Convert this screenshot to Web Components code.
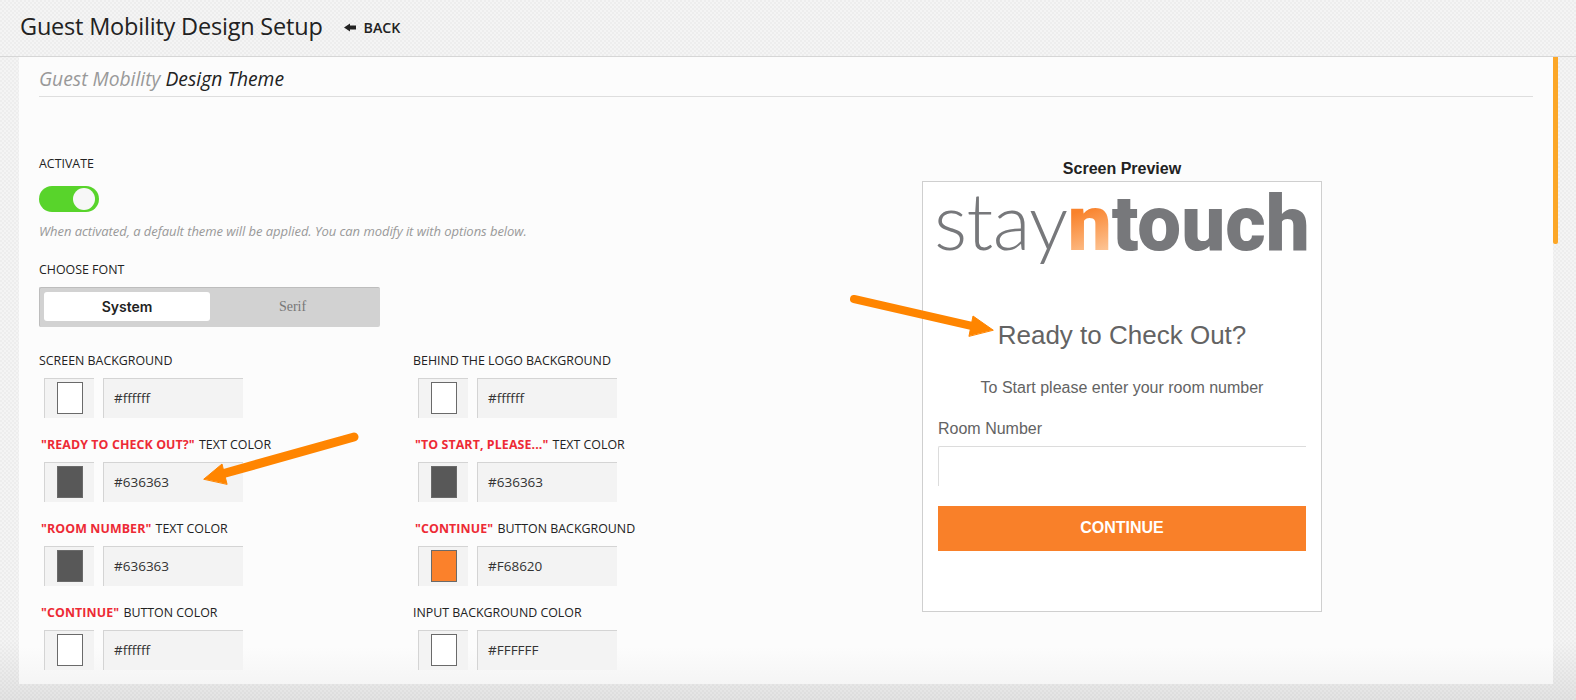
<!DOCTYPE html>
<html>
<head>
<meta charset="utf-8">
<title>Guest Mobility Design Setup</title>
<style>
html, body { margin: 0; height: 700px; overflow: hidden; }
body {
    font-family: 'Open Sans', 'Noto Sans', sans-serif;
    font-stretch: 92%;
    background:
        linear-gradient(rgba(0,0,0,0) 640px, rgba(0,0,0,.07) 700px),
        repeating-conic-gradient(#f4f4f4 0 25%, #ededed 0 50%) 0 0 / 4px 4px;
}
</style>
</head>
<body>
<setup-page>
    <setup-header slot="header" title="Guest Mobility Design Setup"></setup-header>
    <theme-panel>
        <setup-form slot="form">
            <color-field label="SCREEN BACKGROUND" value="#ffffff" swatch="#ffffff"></color-field>
            <color-field label="BEHIND THE LOGO BACKGROUND" value="#ffffff" swatch="#ffffff"></color-field>
            <color-field mark="&quot;READY TO CHECK OUT?&quot;" label="TEXT COLOR" value="#636363" swatch="#585858"></color-field>
            <color-field mark="&quot;TO START, PLEASE...&quot;" label="TEXT COLOR" value="#636363" swatch="#585858"></color-field>
            <color-field mark="&quot;ROOM NUMBER&quot;" label="TEXT COLOR" value="#636363" swatch="#585858"></color-field>
            <color-field mark="&quot;CONTINUE&quot;" label="BUTTON BACKGROUND" value="#F68620" swatch="#fb812b"></color-field>
            <color-field mark="&quot;CONTINUE&quot;" label="BUTTON COLOR" value="#ffffff" swatch="#ffffff"></color-field>
            <color-field label="INPUT BACKGROUND COLOR" value="#FFFFFF" swatch="#ffffff"></color-field>
        </setup-form>
        <screen-preview slot="preview"></screen-preview>
    </theme-panel>
</setup-page>

<script>
class setupPage extends HTMLElement
{
    constructor(){
        super()
        this._shadowRoot = this.attachShadow({mode: 'open'})
        this._shadowRoot.innerHTML = `
            <style>
            :host{ display: block; position: relative; width: 1576px; height: 700px; }
            .body{ display: flex; padding-left: 19px; }
            .bar{ width: 5px; height: 187px; background: #fca728; border-radius: 0 0 2px 2px; }
            .arrows{ position: absolute; left: 0; top: 0; pointer-events: none; }
            </style>
            <slot name="header"></slot>
            <div class="body">
                <slot></slot>
                <div class="bar"></div>
            </div>
            <svg class="arrows" width="1576" height="700">
                <g fill="#ff8500" stroke="#ff8500" stroke-linecap="round">
                    <path d="M354 437 L222 474" stroke-width="9" fill="none"/>
                    <path d="M204 479 L222 464 L227 484 Z" stroke-width="1"/>
                    <path d="M854 299 L972 326" stroke-width="8" fill="none"/>
                    <path d="M993 330 L973 316 L969 336 Z" stroke-width="1"/>
                </g>
            </svg>
        `
    }
}
window.customElements.define('setup-page', setupPage)

class setupHeader extends HTMLElement
{
    constructor(){
        super()
        this._shadowRoot = this.attachShadow({mode: 'open'})
    }
    connectedCallback(){
        this._shadowRoot.innerHTML = `
            <style>
            :host{
                display: flex;
                align-items: center;
                height: 56px;
                border-bottom: 1px solid #d6d6d6;
                padding-left: 20px;
                color: #222;
            }
            h1{ margin: 0; padding-bottom: 5px; font-size: 23.5px; letter-spacing: -0.2px; font-weight: 400; }
            a{ display: flex; align-items: center; margin-left: 21px; padding-bottom: 2px; font-size: 14.2px; font-weight: 600; color: #222; }
            svg{ margin-right: 8px; }
            </style>
            <h1>${this.getAttribute('title')}</h1>
            <a>
                <svg width="12" height="9" viewBox="0 0 12 8"><path d="M0 4 L6 0 V2 H12 V6 H6 V8 Z" fill="#222"/></svg>
                BACK
            </a>
        `
    }
}
window.customElements.define('setup-header', setupHeader)

class themePanel extends HTMLElement
{
    constructor(){
        super()
        this._shadowRoot = this.attachShadow({mode: 'open'})
        this._shadowRoot.innerHTML = `
            <style>
            :host{
                display: block;
                box-sizing: border-box;
                width: 1534px;
                height: 627px;
                padding: 0 20px;
                overflow: hidden;
                background: linear-gradient(#fcfcfc 0, #fcfcfc 590px, #f5f5f5 627px);
            }
            h2{
                margin: 0;
                height: 40px;
                line-height: 44px;
                box-sizing: border-box;
                border-bottom: 1px solid #dedede;
                font-size: 19.3px;
                font-weight: 400;
                font-style: italic;
                color: #222;
            }
            h2 span{ color: #999; }
            .columns{ display: flex; margin-top: 58px; }
            .preview{ margin-left: 120px; margin-top: 3px; }
            </style>
            <h2><span>Guest Mobility</span> Design Theme</h2>
            <div class="columns">
                <slot name="form"></slot>
                <div class="preview"><slot name="preview"></slot></div>
            </div>
        `
    }
}
window.customElements.define('theme-panel', themePanel)

class setupForm extends HTMLElement
{
    constructor(){
        super()
        this._shadowRoot = this.attachShadow({mode: 'open'})
        this._shadowRoot.innerHTML = `
            <style>
            :host{ display: block; width: 763px; font-size: 12.4px; color: #222; }
            label{ display: block; line-height: 18px; height: 16px; }
            .hint{ margin-top: 10px; line-height: 18px; font-size: 13px; letter-spacing: -0.05px; font-style: italic; color: #999; }
            .gap{ margin-top: 21px; }
            .grid{ display: grid; grid-template-columns: 374px 374px; row-gap: 18px; margin-top: 25px; }
            </style>
            <label>ACTIVATE</label>
            <toggle-switch></toggle-switch>
            <div class="hint">When activated, a default theme will be applied. You can modify it with options below.</div>
            <label class="gap">CHOOSE FONT</label>
            <font-choice></font-choice>
            <div class="grid"><slot></slot></div>
        `
    }
}
window.customElements.define('setup-form', setupForm)

class toggleSwitch extends HTMLElement
{
    constructor(){
        super()
        this._shadowRoot = this.attachShadow({mode: 'open'})
        this._shadowRoot.innerHTML = `
            <style>
            :host{
                display: flex;
                justify-content: flex-end;
                align-items: center;
                box-sizing: border-box;
                width: 60px;
                height: 26px;
                margin-top: 15px;
                padding-right: 4px;
                border-radius: 13px;
                background: #58d42b;
            }
            i{ width: 22px; height: 22px; border-radius: 50%; background: #f7f7f7; }
            </style>
            <i></i>
        `
    }
}
window.customElements.define('toggle-switch', toggleSwitch)

class fontChoice extends HTMLElement
{
    constructor(){
        super()
        this._shadowRoot = this.attachShadow({mode: 'open'})
        this._shadowRoot.innerHTML = `
            <style>
            :host{
                display: flex;
                box-sizing: border-box;
                width: 341px;
                height: 40px;
                margin-top: 10px;
                padding: 4px 5px 5px 4px;
                background: #d2d2d2;
                border: 1px solid #bdbdbd;
                border-width: 1px 0 0 1px;
                border-radius: 2px;
            }
            div{ display: flex; align-items: center; justify-content: center; height: 29px; }
            .on{
                width: 166px;
                background: #fff;
                border-radius: 3px;
                font: 600 14px 'Inter', 'Liberation Sans', sans-serif;
                color: #222;
            }
            .off{ flex: 1; font: 14px 'Liberation Serif', serif; color: #777; }
            </style>
            <div class="on">System</div>
            <div class="off">Serif</div>
        `
    }
}
window.customElements.define('font-choice', fontChoice)

class colorField extends HTMLElement
{
    constructor(){
        super()
        this._shadowRoot = this.attachShadow({mode: 'open'})
    }
    connectedCallback(){
        const mark = this.getAttribute('mark')
        const swatch = this.getAttribute('swatch')
        this._shadowRoot.innerHTML = `
            <style>
            :host{ display: block; height: 66px; }
            .label{ height: 16px; line-height: 18px; white-space: nowrap; }
            b{ color: #ed2a35; font-weight: 700; letter-spacing: 0.1px; margin-left: 2px; margin-right: 1px; }
            .row{ display: flex; margin: 10px 0 0 5px; height: 40px; }
            .box{
                box-sizing: border-box;
                background: #f3f3f3;
                border: 1px solid #d4d4d4;
                border-width: 1px 0 0 1px;
            }
            .pick{ display: flex; justify-content: center; align-items: flex-start; width: 50px; padding-top: 3px; }
            .pick i{ display: block; box-sizing: border-box; width: 26px; height: 32px; border: 1px solid #6a6a6a; }
            .hex{ width: 140px; margin-left: 9px; padding-left: 10px; line-height: 39px; font-size: 13.5px; color: #333; }
            </style>
            <div class="label">${mark ? `<b>${mark}</b> ` : ''}${this.getAttribute('label')}</div>
            <div class="row">
                <div class="box pick"><i style="background:${swatch}"></i></div>
                <div class="box hex">${this.getAttribute('value')}</div>
            </div>
        `
    }
}
window.customElements.define('color-field', colorField)

class screenPreview extends HTMLElement
{
    constructor(){
        super()
        this._shadowRoot = this.attachShadow({mode: 'open'})
        this._shadowRoot.innerHTML = `
            <style>
            :host{ display: block; width: 400px; font-family: 'Liberation Sans', sans-serif; font-stretch: normal; color: #636363; }
            .cap{ height: 23px; line-height: 22px; text-align: center; font-size: 16px; font-weight: 700; color: #222; }
            .screen{
                box-sizing: border-box;
                height: 431px;
                padding: 0 15px;
                background: #fff;
                border: 1px solid #cfcfcf;
            }
            .logo{
                height: 76px;
                margin-left: -4px;
                font: 300 78px/76px 'Lato', sans-serif;
                letter-spacing: -0.6px;
                color: #77787b;
                white-space: nowrap;
            }
            .logo b{ font-family: 'Roboto', sans-serif; font-weight: 900; letter-spacing: 0; }
            .logo .n{
                background: linear-gradient(160deg, #f9822b 35%, #fed9b6 95%);
                -webkit-background-clip: text;
                background-clip: text;
                color: transparent;
            }
            h3{ margin: 62px 0 0; font-size: 26px; line-height: 30px; font-weight: 400; text-align: center; }
            p{ margin: 29px 0 0; font-size: 16px; line-height: 18px; text-align: center; }
            .room{ margin-top: 23px; line-height: 18px; font-size: 16px; }
            .input{
                height: 40px;
                margin-top: 8px;
                box-sizing: border-box;
                border: 1px solid #dcdcdc;
                border-width: 1px 0 0 1px;
                border-radius: 2px 0 0 0;
            }
            .go{
                height: 45px;
                margin-top: 20px;
                line-height: 44px;
                text-align: center;
                background: #f98029;
                color: #fff;
                font-size: 16px;
                font-weight: 700;
            }
            </style>
            <div class="cap">Screen Preview</div>
            <div class="screen">
                <div class="logo"><span>stay</span><b class="n">n</b><b>touch</b></div>
                <h3>Ready to Check Out?</h3>
                <p>To Start please enter your room number</p>
                <div class="room">Room Number</div>
                <div class="input"></div>
                <div class="go">CONTINUE</div>
            </div>
        `
    }
}
window.customElements.define('screen-preview', screenPreview)
</script>
</body>
</html>
